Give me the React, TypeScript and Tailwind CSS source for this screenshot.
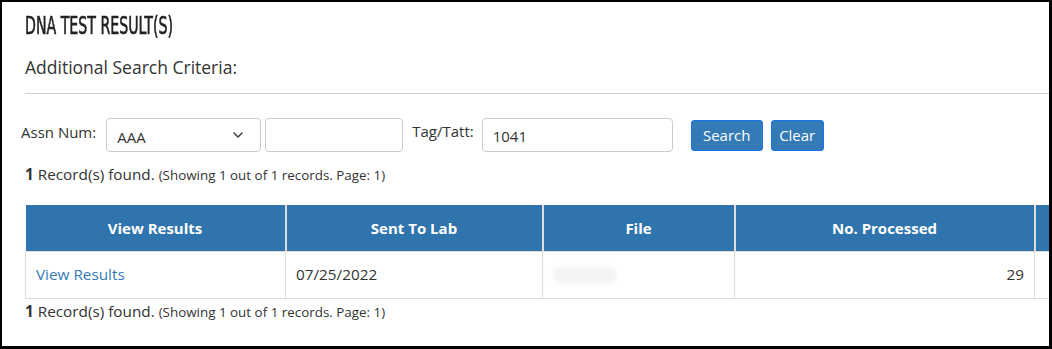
import { ChevronDown } from "lucide-react";

const columns = [
  { label: "View Results", width: "w-[260px]" },
  { label: "Sent To Lab", width: "w-[257px]" },
  { label: "File", width: "w-[192px]" },
  { label: "No. Processed", width: "w-[300px]" },
  { label: "", width: "w-[160px]" },
];

function RecordCount() {
  return (
    <p className="text-[15.3px] leading-[20px] text-[#333]">
      <span className="font-bold">1</span> Record(s) found.{" "}
      <span className="text-[13.4px]">(Showing 1 out of 1 records. Page: 1)</span>
    </p>
  );
}

export default function App() {
  return (
    <div
      className="w-[1052px] h-[349px] bg-white border-black border-t-2 border-l-2 border-r-[3px] border-b-[3px] overflow-hidden text-[#333]"
      style={{ fontFamily: '"Open Sans", "Liberation Sans", sans-serif' }}
    >
      <div className="pl-[23px]">
        <h1
          className="pt-[11px] h-[40px] text-[25px] leading-[26px] whitespace-nowrap origin-left scale-x-[0.63] inline-block text-[#222] [-webkit-text-stroke:0.6px_#222]"
          style={{ fontFamily: '"Liberation Sans Narrow", "DejaVu Sans Condensed", sans-serif' }}
        >
          DNA TEST RESULT(S)
        </h1>
        <p className="mt-[13px] text-[17.5px] leading-[24px]">Additional Search Criteria:</p>
        <hr className="mt-[14px] border-t border-[#ccc]" />
      </div>

      <div className="pl-[19px] pt-[24px] flex items-start text-[15px]">
        <label className="pt-[3px] mr-[10px]">Assn Num:</label>
        <div className="w-[155px] h-[34px] border border-[#ccc] rounded-[4px] flex items-center justify-between pl-[10px] pr-[14px]">
          <span className="pt-[4px]">AAA</span>
          <ChevronDown size={16} strokeWidth={2} className="text-[#333]" />
        </div>
        <div className="ml-[4px] w-[138px] h-[34px] border border-[#ccc] rounded-[4px]" />
        <label className="ml-[9px] pt-[2px] mr-[8px]">Tag/Tatt:</label>
        <div className="w-[191px] h-[34px] border border-[#ccc] rounded-[4px] flex items-center pl-[10px] pt-[2px]">
          1041
        </div>
        <button className="ml-[18px] mt-[2px] h-[31px] w-[72px] rounded-[3px] bg-[#337ab7] border border-[#1a73e8] text-white text-[15px]">
          Search
        </button>
        <button className="ml-[8px] mt-[2px] h-[31px] w-[53px] rounded-[3px] bg-[#337ab7] border border-[#1a73e8] text-white text-[15px]">
          Clear
        </button>
      </div>

      <div className="pl-[23px] pt-[12px]">
        <RecordCount />
        <table className="mt-[20px] border-collapse table-fixed w-[1169px]">
          <thead>
            <tr className="h-[46px] bg-[#3074ad]">
              {columns.map((c, i) => (
                <th
                  key={i}
                  className={`${c.width} border-x-2 border-[#ddd] first:border-l-0 text-white text-[15px] font-bold text-center`}
                >
                  {c.label}
                </th>
              ))}
            </tr>
          </thead>
          <tbody>
            <tr className="h-[47px] text-[15.3px]">
              <td className="border border-[#ddd] px-[10px] text-[#337ab7]">View Results</td>
              <td className="border border-[#ddd] px-[10px]">07/25/2022</td>
              <td className="border border-[#ddd] px-[10px]">
                <div className="w-[64px] h-[16px] rounded-full bg-[#f3f3f3] blur-[2px]" />
              </td>
              <td className="border border-[#ddd] px-[10px] text-right">29</td>
              <td className="border border-[#ddd] px-[10px]" />
            </tr>
          </tbody>
        </table>
        <div className="pt-[2px]">
          <RecordCount />
        </div>
      </div>
    </div>
  );
}
